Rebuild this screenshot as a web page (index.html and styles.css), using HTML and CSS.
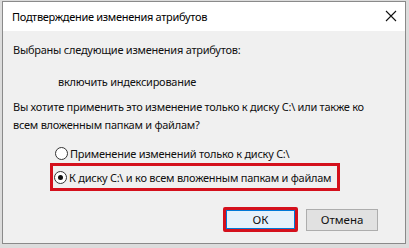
FILE: index.html
```html
<!DOCTYPE html>
<html lang="ru">
<head>
<meta charset="utf-8">
<link rel="stylesheet" href="styles.css">
</head>
<body>
<div class="window">
  <div class="titlebar">
    <span class="title">Подтверждение изменения атрибутов</span>
    <svg class="close" width="12" height="12" viewBox="0 0 12 12"><path d="M1 1 L11 11 M11 1 L1 11" stroke="#111" stroke-width="1.1" fill="none"/></svg>
  </div>
  <div class="content">
    <p class="line first">Выбраны следующие изменения атрибутов:</p>
    <p class="line indent">включить индексирование</p>
    <p class="question">Вы хотите применить это изменение только к диску C:\ или также ко всем вложенным папкам и файлам?</p>
    <div class="options">
      <div class="option">
        <span class="radio"></span>
        <span>Применение изменений только к диску C:\</span>
      </div>
      <div class="option selected">
        <span class="radio checked"></span>
        <span>К диску C:\ и ко всем вложенным папкам и файлам</span>
      </div>
    </div>
    <div class="buttons">
      <div class="ok-frame"><button class="btn ok">ОК</button></div>
      <button class="btn cancel">Отмена</button>
    </div>
  </div>
</div>
</body>
</html>
```
FILE: styles.css
```css
html, body {
  margin: 0;
  padding: 0;
  background: #dcdcdc;
}
body {
  font-family: "Noto Sans", "Open Sans", sans-serif;
  font-size: 11px;
  letter-spacing: -0.25px;
  color: #111;
  width: 409px;
  height: 248px;
  overflow: hidden;
}
.window {
  margin: 1px 0 0 2px;
  width: 402px;
  height: 241px;
  border: 1px solid #8a8a8a;
  background: #f0f0f0;
  display: flex;
  flex-direction: column;
}
.titlebar {
  height: 29px;
  background: #fff;
  display: flex;
  align-items: center;
  justify-content: space-between;
  padding: 0 8px 0 9px;
}
.title {
  font-size: 11px;
  letter-spacing: -0.3px;
  color: #000;
}
.close {
  margin-top: -1px;
}
.content {
  flex: 1;
  padding: 0 0 0 10px;
  display: flex;
  flex-direction: column;
}
.line {
  margin: 0;
  line-height: 17px;
}
.first {
  margin-top: 10px;
}
.indent {
  margin-top: 15px;
  padding-left: 45px;
}
.question {
  margin: 8px 0 0 0;
  line-height: 18px;
  width: 365px;
}
.options {
  margin-top: 9px;
  margin-left: 37px;
  display: flex;
  flex-direction: column;
  gap: 0;
}
.option {
  display: flex;
  align-items: center;
  gap: 2px;
  height: 20px;
  padding-left: 5px;
  width: max-content;
}
.option.selected {
  border: 3px solid #d4101c;
  padding: 1px 6px 1px 1px;
  height: 20px;
}
.radio {
  width: 11px;
  height: 11px;
  border: 1px solid #333;
  border-radius: 50%;
  background: #fff;
  box-sizing: content-box;
  display: inline-block;
  position: relative;
}
.radio.checked::after {
  content: "";
  position: absolute;
  left: 3px;
  top: 3px;
  width: 5px;
  height: 5px;
  border-radius: 50%;
  background: #111;
}
.buttons {
  margin-top: 16px;
  display: flex;
  align-items: center;
  justify-content: flex-end;
  padding-right: 27px;
  gap: 8px;
}
.ok-frame {
  border: 3px solid #d4101c;
  border-radius: 2px;
}
.btn {
  font-family: inherit;
  font-size: 11.5px;
  letter-spacing: 0;
  color: #111;
  padding: 0;
  margin: 0;
  height: 22px;
  display: block;
}
.ok {
  width: 69px;
  height: 19px;
  background: #e5f1fb;
  border: 1px solid #0078d7;
}
.cancel {
  width: 72px;
  background: #e1e1e1;
  border: 1px solid #adadad;
}
```
